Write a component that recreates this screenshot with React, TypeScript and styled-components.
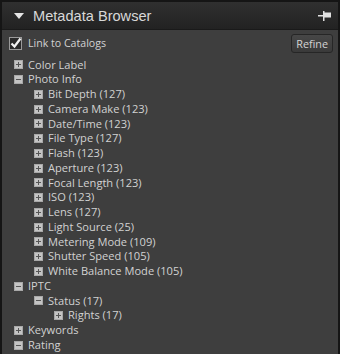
import styled, { createGlobalStyle } from "styled-components";

const Global = createGlobalStyle`
  html, body {
    margin: 0;
    padding: 0;
    background: #3e3e3e;
  }
`;

const Panel = styled.div`
  width: 340px;
  height: 354px;
  box-sizing: border-box;
  background: #3e3e3e;
  border-left: 2px solid #151515;
  border-right: 2px solid #151515;
  border-top: 2px solid #151515;
  overflow: hidden;
  font-family: "Open Sans", "DejaVu Sans", sans-serif;
  color: #d2d2d2;
`;

const Header = styled.div`
  height: 27px;
  display: flex;
  align-items: center;
  padding: 0 6px 0 12px;
  background: linear-gradient(#303030, #222222);
  border-bottom: 1px solid #1a1a1a;
`;

const Triangle = styled.span`
  width: 0;
  height: 0;
  border-left: 5px solid transparent;
  border-right: 5px solid transparent;
  border-top: 6px solid #e6e6e6;
  margin-right: 9px;
  margin-top: 1px;
`;

const Title = styled.span`
  flex: 1;
  font-family: "Liberation Sans", Arial, sans-serif;
  font-size: 14.6px;
  color: #d8d8d8;
`;

const LinkRow = styled.div`
  display: flex;
  align-items: center;
  height: 26px;
  padding: 0 5px 0 7px;
`;

const Check = styled.span`
  width: 11px;
  height: 11px;
  border: 1px solid #9a9a9a;
  background: #2a2a2a;
  position: relative;
  margin-right: 6px;
  svg {
    position: absolute;
    left: -1px;
    top: -2px;
  }
`;

const LinkLabel = styled.span`
  flex: 1;
  font-size: 10.6px;
`;

const Button = styled.button`
  height: 19px;
  padding: 0 4px;
  border: 1px solid #262626;
  border-radius: 3px;
  background: linear-gradient(#474747, #3a3a3a);
  color: #d4d4d4;
  font-family: "Open Sans", "DejaVu Sans", sans-serif;
  font-size: 10.8px;
  line-height: 17px;
`;

const Tree = styled.div`
  display: flex;
  flex-direction: column;
  padding-top: 1.5px;
`;

const Row = styled.div<{ $level: number }>`
  display: flex;
  align-items: center;
  height: 14.75px;
  line-height: 14.75px;
  padding-left: ${(p) => 12 + p.$level * 20}px;
  font-size: 11.1px;
  white-space: nowrap;
`;

const Toggle = styled.span`
  width: 9px;
  height: 9px;
  margin-right: 5px;
  display: flex;
`;

type Item = { label: string; level: number; open?: boolean };

const items: Item[] = [
  { label: "Color Label", level: 0 },
  { label: "Photo Info", level: 0, open: true },
  { label: "Bit Depth (127)", level: 1 },
  { label: "Camera Make (123)", level: 1 },
  { label: "Date/Time (123)", level: 1 },
  { label: "File Type (127)", level: 1 },
  { label: "Flash (123)", level: 1 },
  { label: "Aperture (123)", level: 1 },
  { label: "Focal Length (123)", level: 1 },
  { label: "ISO (123)", level: 1 },
  { label: "Lens (127)", level: 1 },
  { label: "Light Source (25)", level: 1 },
  { label: "Metering Mode (109)", level: 1 },
  { label: "Shutter Speed (105)", level: 1 },
  { label: "White Balance Mode (105)", level: 1 },
  { label: "IPTC", level: 0, open: true },
  { label: "Status (17)", level: 1, open: true },
  { label: "Rights (17)", level: 2 },
  { label: "Keywords", level: 0 },
  { label: "Rating", level: 0, open: true },
];

function Box({ open }: { open?: boolean }) {
  return (
    <svg width="9" height="9" viewBox="0 0 9 9">
      <rect x="0" y="0" width="9" height="9" fill="#c4c4c4" />
      <rect x="0.5" y="0.5" width="8" height="8" fill="none" stroke="#a8a8a8" />
      <rect x="2" y="4" width="5" height="1" fill="#555" />
      {!open && <rect x="4" y="2" width="1" height="5" fill="#555" />}
    </svg>
  );
}

export default function App() {
  return (
    <>
      <Global />
      <Panel>
        <Header>
          <Triangle />
          <Title>Metadata Browser</Title>
          <svg width="14" height="10" viewBox="0 0 14 10">
            <rect x="0" y="4" width="6" height="1.5" fill="#e0e0e0" />
            <rect x="5" y="0" width="1.5" height="10" fill="#e0e0e0" />
            <rect x="6" y="1.5" width="7" height="5" fill="#e0e0e0" />
          </svg>
        </Header>
        <LinkRow>
          <Check>
            <svg width="14" height="14" viewBox="0 0 14 14">
              <path d="M2.5 7.5 L5.5 10.5 L11.5 2.5" fill="none" stroke="#f2f2f2" strokeWidth="2.2" />
            </svg>
          </Check>
          <LinkLabel>Link to Catalogs</LinkLabel>
          <Button>Refine</Button>
        </LinkRow>
        <Tree>
          {items.map((it) => (
            <Row key={it.label} $level={it.level}>
              <Toggle>
                <Box open={it.open} />
              </Toggle>
              {it.label}
            </Row>
          ))}
        </Tree>
      </Panel>
    </>
  );
}
